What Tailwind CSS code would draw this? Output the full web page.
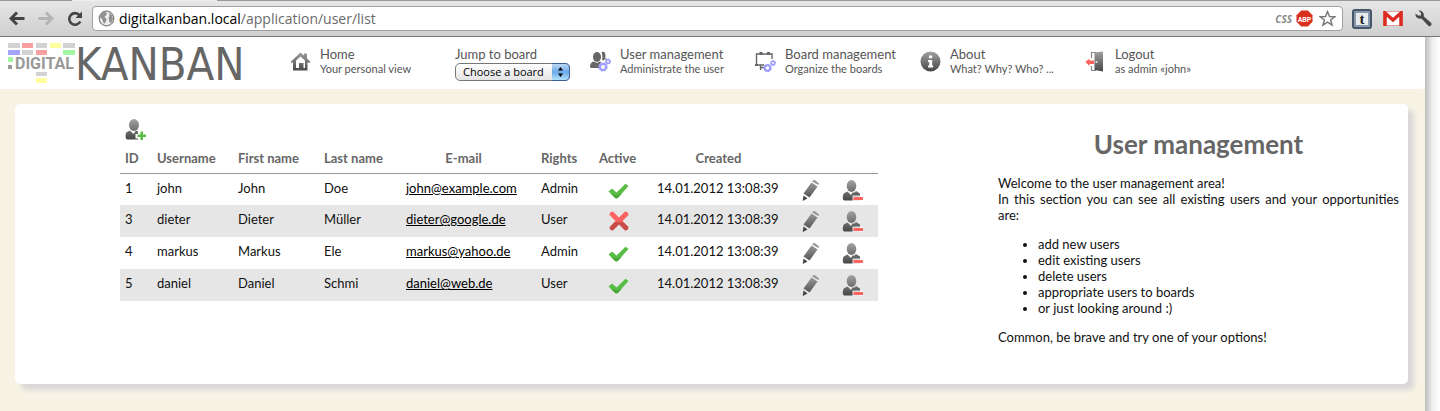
<!DOCTYPE html>
<html lang="en">
<head>
<meta charset="utf-8">
<title>User management</title>
<script src="https://cdn.jsdelivr.net/npm/@tailwindcss/browser@4"></script>
</head>
<body class="min-h-screen bg-[#f6f3e4] font-['Lato','Open_Sans',sans-serif] text-[13px] leading-4 text-[#111] flex flex-col">

<!-- Shared gradients and row icons -->
<svg class="absolute size-0" aria-hidden="true">
  <defs>
    <linearGradient id="gh" gradientUnits="userSpaceOnUse" x1="0" y1="0" x2="0" y2="21"><stop offset="0" stop-color="#a4a4a4"/><stop offset="1" stop-color="#444"/></linearGradient>
    <symbol id="person" viewBox="0 0 21 21">
      <ellipse cx="9.500" cy="6" rx="4.800" ry="6" fill="url(#gh)"/>
      <path d="M5.500 11.500 9 15l1.500-2.500h2L14 11l4 2.500V20.500H2.500C0 20.500.5 14 2.500 13z" fill="url(#gh)"/>
    </symbol>
    <symbol id="check" viewBox="0 0 21 16"><path d="M.5 8.500 4 5.500l4.500 4L17.500.8l3 2.200L9.500 15.200H7.500z" fill="#58bd45"/><path d="M3 11 9 12.500 14 10.500 9.500 15.200H7.500z" fill="#48a337"/></symbol>
    <linearGradient id="r" x1="0" y1="0" x2="0" y2="1"><stop offset=".5" stop-color="#fb6460"/><stop offset=".6" stop-color="#c94b48"/></linearGradient>
    <symbol id="cross" viewBox="0 0 20 20"><path d="M4 .5 10 6.500 16 .5Q19.500.5 19.500 4L13.500 10l6 6Q19.500 19.500 16 19.500L10 13.500 4 19.500Q.5 19.500.5 16L6.500 10 .5 4Q.5.5 4 .5z" fill="url(#r)"/></symbol>
    <symbol id="pencil" viewBox="0 0 18 21"><path d="M11.500 0h1.500l4 3.500-.5 1.500L10 1.500zM9.500 2.500 15.500 6.500 7.500 17.500 1.500 13.500z" fill="url(#gh)"/><path d="M1.500 15.500 5.500 18.500.7 21z" fill="#444"/></symbol>
  </defs>
</svg>

<!-- Tab strip edge -->
<div class="flex h-px bg-[#eee]"><div class="w-[72px] bg-[#999]"></div><div class="ml-[145px] flex-1 bg-[#999]"></div></div>

<!-- Browser toolbar -->
<div class="flex h-9 items-center border-b border-b-[#777] bg-linear-to-b from-[#e6e6e6] to-[#cfcfcf] pl-[9px] pr-2">
  <button type="button" aria-label="Back" class="mr-[13px]"><svg width="16" height="15" viewBox="0 0 16 15" fill="none" stroke="#444" stroke-width="3"><path d="M15.500 7.500H3M8 1.500l-6 6 6 6"/></svg></button>
  <button type="button" aria-label="Forward" class="mr-[13px]"><svg width="16" height="15" viewBox="0 0 16 15" fill="none" stroke="#b4b4b4" stroke-width="3"><path d="M.5 7.500H13M8 1.500l6 6-6 6"/></svg></button>
  <button type="button" aria-label="Reload" class="mr-[9px]"><svg width="16" height="16" viewBox="0 0 16 16"><path d="M12.500 4.200A5.800 5.800 0 1 0 13.300 10.500" fill="none" stroke="#444" stroke-width="2.600"/><path d="M15 .5v6.500H8.500z" fill="#444"/></svg></button>
  <div class="flex h-[25px] flex-1 items-center rounded border border-[#a0a0a0] bg-white pl-[5px] pr-[6px]">
    <svg width="17" height="17" viewBox="0 0 17 17"><circle cx="8.500" cy="8.500" r="7.300" fill="#eee" stroke="#808080" stroke-width="1.200"/><path d="M3 4.500 6 2l3 .8-.5 2L6.500 7l2 2-.5 2.500-2 2.500-2-5-2-1.500zM11 3l3 2 1 4-2 4-1.500-.5L10.500 8l1-2z" fill="#909090"/></svg>
    <div class="ml-1 flex-1 font-['Open_Sans',sans-serif] text-sm leading-5 text-[#6a6a6a]"><span class="text-black">digitalkanban.local</span>/application/user/list</div>
    <span class="font-['Open_Sans',sans-serif] text-[10px] font-bold italic text-[#8a8a8a]">CSS</span>
    <svg class="ml-1" width="17" height="17" viewBox="0 0 17 17"><path d="M5.200.5h6.600l4.700 4.700v6.600l-4.700 4.700H5.200L.5 11.800V5.200z" fill="#d8301c"/><text x="8.500" y="11.500" text-anchor="middle" font-family="Roboto" font-size="7" font-weight="700" fill="#fff">ABP</text></svg>
    <svg class="ml-[6px]" width="17" height="17" viewBox="0 0 17 17"><path d="m8.500 1.500 2 5 5.300.2-4.200 3.300 1.500 5.200-4.600-3-4.600 3 1.500-5.200L1.200 6.700l5.300-.2z" fill="#fff" stroke="#777" stroke-width="1.400"/></svg>
  </div>
  <svg class="ml-[9px]" width="20" height="20" viewBox="0 0 20 20"><rect x="1" y="1" width="18" height="18" rx="2" fill="#8598ae" stroke="#46566a" stroke-width="2"/><rect x="4" y="4" width="12" height="12" fill="#e8ebee"/><text x="10" y="15" text-anchor="middle" font-family="Liberation Serif" font-size="15" font-weight="700" fill="#222">t</text></svg>
  <svg class="ml-[11px]" width="20" height="15" viewBox="0 0 20 15"><rect x=".5" y=".5" width="19" height="14" fill="#fff" stroke="#e0a09c"/><path d="M2 15V2l8 7 8-7v13" fill="none" stroke="#dc2b22" stroke-width="3.500"/></svg>
  <svg class="ml-[12px]" width="17" height="17" viewBox="0 0 17 17"><path d="M3.500.5 6 3v2.500H3L.5 3.500C0 7 3 9.500 6.500 8.500l7 7.500q1.500.8 2.500-.5t.3-2.500L8.800 6.500C9.500 2.500 6.500 0 3.500.5z" fill="#484848"/></svg>
</div>

<div class="flex flex-1">
  <div class="min-w-0 flex-1">
    <!-- Site header -->
    <header class="flex h-[52px] rounded-br bg-white pl-2 text-[#555]">
      <a href="#" aria-label="Digital Kanban" class="mt-1 w-[282px] shrink-0">
        <svg class="overflow-visible" width="240" height="44" viewBox="0 0 240 44">
          <g fill="#d2d2d2"><path d="M0 2h12v5H0zM28 2h11v5H28zM55 2h12v5H55zM14 9h11v5H14zM28 31h11v4H28z"/><path fill="#999" d="M0 24h4v4H0z"/></g>
          <path fill="#f9a0a0" d="M14 2h11v5H14zM28 9h11v5H28z"/>
          <path fill="#ffff9c" d="M42 2h11v5H42zM28 37h11v5H28z"/>
          <path fill="#a3a3fa" d="M0 9h12v5H0z"/>
          <path fill="#a3f7a3" d="M55 9h12v5H55zM0 16h5v5H0z"/>
          <text x="7" y="28" font-family="Roboto" font-size="16" font-weight="700" fill="#999">DIGITAL</text>
          <text x="67" y="39" font-family="DejaVu Sans Condensed" font-size="45" fill="#666">KANBAN</text>
        </svg>
      </a>
      <nav class="flex pt-[9px] text-[11px] leading-[14px]">
        <a href="#" class="flex w-[165px] gap-[9px]">
          <svg class="mt-[5px]" width="21" height="21" viewBox="0 0 21 21"><path d="M.5 11 10.500 1.500 14 4.500V2.500h3V7.500L20.500 11 19 12 17.500 11V19.500H3V11L2 12z" fill="url(#gh)"/><path d="M6 9.500 10.500 5.500 15 9.500V17H13.500V12H9v5H6z" fill="#fff"/></svg>
          <span><span class="block text-[13px] leading-4">Home</span>Your personal view</span>
        </a>
        <div class="w-[135px]">
          <label for="board" class="block text-[13px] leading-[17px]">Jump to board</label>
          <div class="relative w-[115px]">
            <select id="board" class="block h-[18px] w-full appearance-none rounded-[5px] border border-[#777] bg-linear-to-b from-white to-[#e4e4e4] pl-[7px] font-['Open_Sans',sans-serif] text-[11px] leading-4 text-black"><option>Choose a board</option></select>
            <svg class="pointer-events-none absolute top-0 right-0" width="18" height="18" viewBox="0 0 18 18"><defs><linearGradient id="b" x1="0" y1="0" x2="0" y2="1"><stop offset="0" stop-color="#c4dcf5"/><stop offset=".5" stop-color="#6ba9e8"/><stop offset="1" stop-color="#b8e4fc"/></linearGradient></defs><path d="M0 .5h13q4.500 0 4.500 4.500v8q0 4.500-4.500 4.500H0z" fill="url(#b)"/><path d="M0 .5h13q4.500 0 4.500 4.500v8q0 4.500-4.500 4.500H0" fill="none" stroke="#3a5f9a"/><path d="m8.500 4 2.500 3.500H6zM8.500 14 6 10.500h5z" fill="#000"/></svg>
          </div>
        </div>
        <a href="#" class="flex w-[165px] gap-[9px]">
          <svg class="mt-[5px]" width="21" height="21" viewBox="0 0 21 21"><g fill="#666"><ellipse cx="7" cy="6" rx="4" ry="5"/><path d="M0 16q0-5 4-5.500l3 1.500 3-1.500 1.500 1q-3 1-2.500 5.500H1.500Q0 17 0 16z"/><path d="M11.500 1q4-1.500 4 4 0 3-2 4.500l-1.500-.5q1-4-.5-8zM15.500 7l1.500 1-2 1z"/></g><g fill="none" stroke="#9a9aff"><circle cx="13" cy="16" r="3" stroke-width="2"/><circle cx="13" cy="16" r="4.200" stroke-width="1" stroke-dasharray="2 1.300"/><circle cx="18" cy="10.500" r="1.800" stroke-width="1.500"/><circle cx="18" cy="10.500" r="2.700" stroke-width=".8" stroke-dasharray="1.200 .9"/></g></svg>
          <span><span class="block text-[13px] leading-4">User management</span>Administrate the user</span>
        </a>
        <a href="#" class="flex w-[165px] gap-[9px]">
          <svg class="mt-[5px]" width="21" height="21" viewBox="0 0 21 21"><path d="M1.500 13.500V3H17v5M1 14h8M5 16.500h5M5.500 14v5" fill="none" stroke="#666" stroke-width="1.400"/><path d="M4.500 1h3v3h-3zM12 1h3v3h-3zM0 13h3v2H0z" fill="#666"/><g fill="none" stroke="#9a9aff"><circle cx="12.500" cy="17" r="2.800" stroke-width="2"/><circle cx="12.500" cy="17" r="3.600" stroke-width="1" stroke-dasharray="2 1.300"/><circle cx="18" cy="12" r="1.800" stroke-width="1.500"/><circle cx="18" cy="12" r="2.700" stroke-width=".8" stroke-dasharray="1.200 .9"/></g></svg>
          <span><span class="block text-[13px] leading-4">Board management</span>Organize the boards</span>
        </a>
        <a href="#" class="flex w-[165px] gap-[9px]">
          <svg class="mt-[5px]" width="21" height="21" viewBox="0 0 21 21"><circle cx="10.500" cy="10.500" r="10" fill="url(#gh)"/><path d="M9 4.500h3.200v2.800H9zM8 9h4.200v5.500h1V16.500H8v-2h1.200V11H8z" fill="#fff"/></svg>
          <span><span class="block text-[13px] leading-4">About</span>What? Why? Who? ...</span>
        </a>
        <a href="#" class="flex w-[165px] gap-[9px]">
          <svg class="mt-[5px]" width="21" height="21" viewBox="0 0 21 21"><path d="M6.500 7V1.500H11M6.500 15V19.500H11" fill="none" stroke="#888" stroke-width="1.200"/><path d="M9.500 1.500 18 .5V20.500L9.500 19z" fill="url(#gh)"/><circle cx="11.500" cy="11" r="1" fill="#eee"/><path d="M.3 11 4.500 7.500V9.500H9v3.500H4.500v2z" fill="#fb6460"/></svg>
          <span><span class="block text-[13px] leading-4">Logout</span>as admin «john»</span>
        </a>
      </nav>
    </header>

    <!-- Content card -->
    <main class="mt-[15px] mr-[17px] mb-[27px] ml-[15px] flex min-h-[280px] rounded-[5px] bg-white pl-[105px] pr-[9px] shadow-[6px_6px_5px_#d8d8d8]">
      <div class="flex-1 pt-[15px]">
        <button type="button" aria-label="Add user" class="ml-[5px] block"><svg width="21" height="22" viewBox="0 0 21 22"><ellipse cx="9" cy="6" rx="5" ry="6" fill="url(#gh)"/><path d="M5 11.500 8.500 15 11 11.500 13 12.500V20.500H2.500C0 20.500 0 14 2 13z" fill="url(#gh)"/><path d="M15 10.500h4.500v4.500H21v4.500h-1.500V21.500H15V19.500H10.500V15H15z" fill="#fff"/><path d="M15.500 12.500h2.500v3h3v2.500h-3v3h-2.500v-3h-3v-2.500h3z" fill="#58bd45"/></svg></button>
        <table class="mt-1 w-[758px] table-fixed text-left">
          <colgroup><col class="w-[32px]"><col class="w-[81px]"><col class="w-[86px]"><col class="w-[82px]"><col class="w-[135px]"><col class="w-[58px]"><col class="w-[58px]"><col class="w-[145px]"><col class="w-[40px]"><col class="w-[41px]"></colgroup>
          <thead class="text-[#666]">
            <tr class="h-[28px] border-b border-[#999] align-top [&>th]:pt-[5px] [&>th]:pl-[5px] [&>th]:whitespace-nowrap"><th>ID</th><th>Username</th><th>First name</th><th>Last name</th><th class="pr-[15px] text-center">E-mail</th><th>Rights</th><th>Active</th><th class="pr-[17px] text-center">Created</th><th aria-label="Edit"></th><th aria-label="Delete"></th></tr>
          </thead>
          <tbody id="rows"></tbody>
        </table>
      </div>
      <aside class="w-[401px] shrink-0">
        <h1 class="mt-6 text-center text-[26px] leading-8 font-bold text-[#666]">User management</h1>
        <p class="mt-[15px] text-justify">Welcome to the user management area!<br>In this section you can see all existing users and your opportunities are:</p>
        <ul class="my-[13px] list-disc pl-10"><li>add new users</li><li>edit existing users</li><li>delete users</li><li>appropriate users to boards</li><li>or just looking around :)</li></ul>
        <p>Common, be brave and try one of your options!</p>
      </aside>
    </main>
  </div>
  <div class="w-[15px] bg-linear-to-r from-[#bbb] via-[#f0f0f0] to-white"></div>
</div>

<script>
const users = [
  [1,'john','John','Doe','john@example.com','Admin',true],
  [3,'dieter','Dieter','Müller','dieter@google.de','User',false],
  [4,'markus','Markus','Ele','markus@yahoo.de','Admin',true],
  [5,'daniel','Daniel','Schmi','daniel@web.de','User',true]
];
document.getElementById('rows').innerHTML = users.map(([id,name,first,last,mail,rights,active]) => `
<tr class="h-8 align-top even:bg-[#e6e6e6] [&>td]:pl-[5px] [&>td]:pt-[6px]">
<td>${id}</td><td>${name}</td><td>${first}</td><td>${last}</td><td><a class="text-black underline" href="mailto:${mail}">${mail}</a></td><td>${rights}</td>
<td>${active ? '<svg class="mt-[3px] ml-[9px]" role="img" aria-label="Active" width="21" height="16"><use href="#check"/></svg>' : '<svg class="ml-[10px]" role="img" aria-label="Inactive" width="20" height="20"><use href="#cross"/></svg>'}</td>
<td class="whitespace-nowrap">14.01.2012 13:08:39</td>
<td><button type="button" aria-label="Edit ${name}" class="block"><svg width="18" height="21"><use href="#pencil"/></svg></button></td>
<td><button type="button" aria-label="Delete ${name}" class="block"><svg width="21" height="21" viewBox="0 0 21 21"><use href="#person" width="21" height="21"/><path d="M10.500 15.500H21V21H10.500z" fill="#fff" opacity=".8"/><path d="M11.500 17H21v3h-9.500z" fill="#fb6460"/></svg></button></td>
</tr>`).join('');
</script>
</body>
</html>
